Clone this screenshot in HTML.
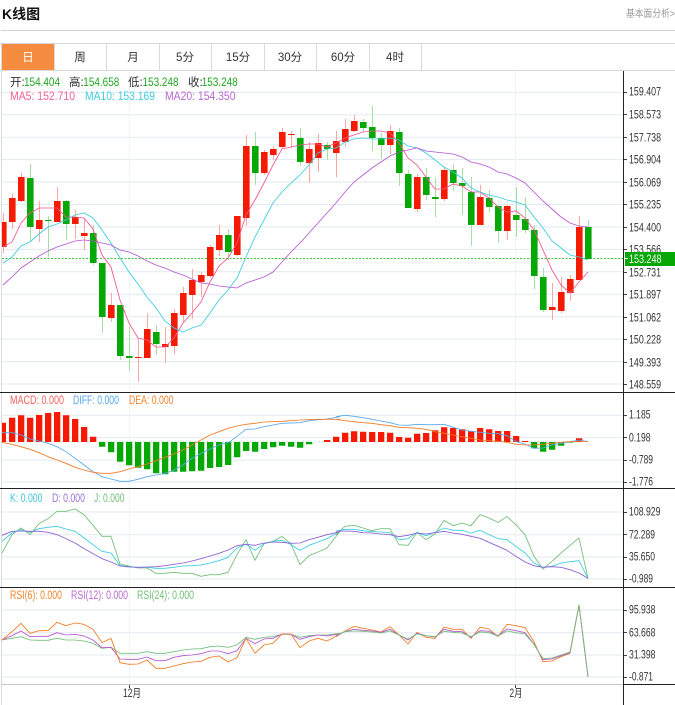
<!DOCTYPE html>
<html><head><meta charset="utf-8"><title>K线图</title>
<style>
html,body{margin:0;padding:0;background:#fff;width:675px;height:705px;overflow:hidden}
svg{display:block}
text{font-family:"Liberation Sans","Noto Sans CJK SC",sans-serif;font-size:11.5px;fill:#333}
.l{fill:none;stroke-width:2.6;stroke-linejoin:round}
.g{stroke:#e1e9ef;stroke-width:1;fill:none}
</style></head><body>
<svg width="675" height="705" viewBox="0 0 675 705" xmlns="http://www.w3.org/2000/svg">
<rect width="675" height="705" fill="#fff"/>
<!-- header -->
<text x="2" y="19" style="font-size:14px;font-weight:bold;fill:#111">K线图</text>
<text x="626" y="17" style="font-size:10px;fill:#999" textLength="49" lengthAdjust="spacingAndGlyphs">基本面分析&gt;</text>
<path d="M1 30.5H675" stroke="#d3d3d3" fill="none"/>
<!-- tabs -->
<path d="M0 43.5H675M0 70.5H675M1.5 44V705M54.5 44V70M106.5 44V70M159.5 44V70M211.5 44V70M264.5 44V70M316.5 44V70M369.5 44V70M421.5 44V70" stroke="#d9d9d9" fill="none"/>
<rect x="2" y="44" width="52" height="26" fill="#f68c40"/>
<g text-anchor="middle">
<text x="28" y="61" style="font-size:11.5px;fill:#fff">日</text>
<text x="80" y="61" style="font-size:11.5px">周</text>
<text x="133" y="61" style="font-size:11.5px">月</text>
<text x="185" y="61" style="font-size:11.5px">5分</text>
<text x="238" y="61" style="font-size:11.5px">15分</text>
<text x="290" y="61" style="font-size:11.5px">30分</text>
<text x="343" y="61" style="font-size:11.5px">60分</text>
<text x="395" y="61" style="font-size:11.5px">4时</text>
</g>
<!-- grids -->
<path class="g" d="M2 92.3H623M2 114.7H623M2 137.2H623M2 159.6H623M2 182H623M2 204.5H623M2 226.9H623M2 249.4H623M2 271.8H623M2 294.2H623M2 316.7H623M2 339.1H623M2 361.6H623M2 384H623"/>
<path class="g" d="M2 415.3H623M2 437.7H623M2 460H623M2 482H623M2 512H623M2 534.7H623M2 557H623M2 579H623M2 610H623M2 632.7H623M2 655H623M2 677H623"/>
<path d="M129.5 71V684M515.5 71V684" stroke="#eef3f6" fill="none"/>
<!-- price dash -->
<path d="M2 258.5H623" stroke="#3cc43c" stroke-dasharray="2 1.5" fill="none"/>
<!-- candle wicks -->
<path fill="none" stroke="#f9a8a2" d="M3.5 213V253M12.5 194V229M21.5 173V202M39.5 201V242M57.5 187V220M75.5 210V239M84.5 218V250M111.5 293V322M138.5 338V382M147.5 313V358M165.5 327V363M174.5 309V354M183.5 287V322M192.5 269V319M201.5 272V297M210.5 245V278M219.5 225V256M237.5 216V256M246.5 135V226M264.5 150V175M273.5 146V160M282.5 128V148M291.5 131V148M309.5 142V183M318.5 134V172M336.5 131V177M345.5 119V147M354.5 115V132M390.5 125V154M417.5 174V212M444.5 167V201M480.5 185V225M507.5 205V240M552.5 283V320M561.5 277V313M570.5 275V301M579.5 216V280"/>
<path fill="none" stroke="#a6dfa6" d="M30.5 164V242M48.5 216V257M66.5 200V240M93.5 225V265M102.5 263V333M120.5 305V360M129.5 326V371M156.5 325V355M228.5 229V260M255.5 132V185M300.5 128V166M327.5 142V160M363.5 119V132M372.5 106V151M381.5 133V159M399.5 128V186M408.5 170V208M426.5 168V200M435.5 178V217M453.5 164V191M462.5 168V215M471.5 177V246M489.5 190V212M498.5 205V243M516.5 187V237M525.5 197V233M534.5 225V289M543.5 268V312M588.5 220V259"/>
<!-- candle bodies -->
<path fill="#f41a04" d="M2 222h4.6V247H2zM9 198h6.6V222H9zM18 177h6.6V201H18zM36 220h6.6V229H36zM54 201h6.6V222H54zM72 217h6.6V224H72zM81 233h6.6V236H81zM108 305h6.6V318H108zM135 357h6.6V358H135zM144 329h6.6V358H144zM162 344h6.6V347H162zM171 313h6.6V346H171zM180 293h6.6V315H180zM189 280h6.6V295H189zM198 275h6.6V282H198zM207 247h6.6V276H207zM216 235h6.6V250H216zM234 216h6.6V255H234zM243 146h6.6V218H243zM261 152h6.6V173H261zM270 149h6.6V155H270zM279 132h6.6V147H279zM288 134h6.6V135H288zM306 149h6.6V163H306zM315 143h6.6V158H315zM333 141h6.6V153H333zM342 129h6.6V142H342zM351 121h6.6V131H351zM387 131h6.6V145H387zM414 177h6.6V209H414zM441 170h6.6V199H441zM477 197h6.6V225H477zM504 206h6.6V231H504zM549 307h6.6V310H549zM558 292h6.6V311H558zM567 279h6.6V293H567zM576 227h6.6V280H576z"/>
<path fill="#06a806" d="M27 178h6.6V227H27zM45 220h6.6V221H45zM63 201h6.6V224H63zM90 233h6.6V263H90zM99 263h6.6V317H99zM117 305h6.6V356H117zM126 356h6.6V358H126zM153 332h6.6V344H153zM225 235h6.6V252H225zM252 146h6.6V173H252zM297 138h6.6V162H297zM324 145h6.6V149H324zM360 122h6.6V128H360zM369 127h6.6V138H369zM378 138h6.6V145H378zM396 132h6.6V173H396zM405 174h6.6V208H405zM423 177h6.6V195H423zM432 197h6.6V199H432zM450 170h6.6V183H450zM459 183h6.6V186H459zM468 192h6.6V225H468zM486 198h6.6V207H486zM495 206h6.6V231H495zM513 215h6.6V220H513zM522 219h6.6V230H522zM531 230h6.6V276H531zM540 277h6.6V310H540zM585 227h6.6V259H585z"/>
<!-- MA lines -->
<polyline fill="none" stroke-width=".85" stroke="#f2558d" points="3,247 12,242 21,223 30,213 39,208 48,208 57,208 66,217 75,217 84,218 93,229 102,255 111,267 120,300 129,323 138,338 147,340 156,347 165,347 174,338 183,323 192,313 201,302 210,282 219,266 228,258 237,243 246,215 255,200 264,183 273,165 282,149 291,147 300,145 309,144 318,144 327,147 336,143 345,138 354,135 363,132 372,131 381,131 390,133 399,143 408,158 417,165 426,177 435,189 444,189 453,184 462,186 471,192 480,192 489,198 498,207 507,212 516,211 525,218 534,230 543,250 552,270 561,285 570,293 579,282 588,272"/>
<polyline fill="none" stroke-width=".85" stroke="#38cce0" points="3,263 12,257 21,246 30,242 39,234 48,227 57,224 66,220 75,215 84,213 93,218 102,230 111,243 120,258 129,272 138,284 147,297 156,308 165,321 174,328 183,332 192,328 201,325 210,313 219,300 228,290 237,278 246,257 255,237 264,220 273,203 282,192 291,183 300,175 309,165 318,153 327,149 336,148 345,142 354,139 363,138 372,139 381,139 390,138 399,140 408,146 417,148 426,153 435,160 444,167 453,172 462,178 471,188 480,192 489,195 498,197 507,200 516,202 525,205 534,217 543,228 552,241 561,248 570,255 579,257 588,260"/>
<polyline fill="none" stroke-width=".85" stroke="#b557cf" points="3,285 12,277 21,268 30,262 39,256 48,251 57,247 66,244 75,241 84,240 93,241 102,243 111,245 120,250 129,252 138,256 147,261 156,265 165,268 174,272 183,275 192,279 201,283 210,284 219,286 228,287 237,288 246,283 255,280 264,277 273,272 282,262 291,252 300,243 309,233 318,223 327,213 336,203 345,192 354,182 363,175 372,168 381,162 390,156 399,152 408,150 417,148 426,151 435,152 444,153 453,154 462,157 471,162 480,164 489,167 498,172 507,174 516,178 525,183 534,192 543,201 552,209 561,217 570,223 579,226 588,227"/>
<!-- MACD -->
<path d="M2 441.7H590" stroke="#c9e0e0" stroke-dasharray="2 2" fill="none"/>
<path fill="#f41a04" d="M2 422.7h4V442H2zM9 417.7h6.3V442H9zM18 415.3h6.3V442H18zM27 417.7h6.3V442H27zM36 415h6.3V442H36zM45 413h6.3V442H45zM54 412h6.3V442H54zM63 415.3h6.3V442H63zM72 419h6.3V442H72zM81 427h6.3V442H81zM90 436.7h6.3V442H90zM324 440h6.3V442H324zM333 436.7h6.3V442H333zM342 432.7h6.3V442H342zM351 431.3h6.3V442H351zM360 431.7h6.3V442H360zM369 432h6.3V442H369zM378 432h6.3V442H378zM387 432.7h6.3V442H387zM396 437h6.3V442H396zM405 437.7h6.3V442H405zM414 433.7h6.3V442H414zM423 433h6.3V442H423zM432 430.3h6.3V442H432zM441 427.3h6.3V442H441zM450 428h6.3V442H450zM459 429.3h6.3V442H459zM468 431h6.3V442H468zM477 428h6.3V442H477zM486 429.3h6.3V442H486zM495 431h6.3V442H495zM504 431h6.3V442H504zM513 436h6.3V442H513zM522 441h6.3V442H522zM576 438.3h6.3V442H576z"/>
<path fill="#06a806" d="M99 442h6.3V446.7H99zM108 442h6.3V452.3H108zM117 442h6.3V461.7H117zM126 442h6.3V465.3H126zM135 442h6.3V467.7H135zM144 442h6.3V469.3H144zM153 442h6.3V473.3H153zM162 442h6.3V474.3H162zM171 442h6.3V471.7H171zM180 442h6.3V471.7H180zM189 442h6.3V471.3H189zM198 442h6.3V470.7H198zM207 442h6.3V468H207zM216 442h6.3V467H216zM225 442h6.3V465H225zM234 442h6.3V457.3H234zM243 442h6.3V451H243zM252 442h6.3V451.7H252zM261 442h6.3V449H261zM270 442h6.3V447.3H270zM279 442h6.3V445.7H279zM288 442h6.3V446.7H288zM297 442h6.3V447.7H297zM306 442h6.3V444.3H306zM531 442h6.3V448.3H531zM540 442h6.3V451.7H540zM549 442h6.3V449.7H549zM558 442h6.3V445.7H558zM567 442h6.3V442.6H567z"/>
<g transform="translate(0,390) scale(.33333)">
<polyline class="l" stroke="#56a8ee" points="6,128 36,128 63,135 90,147 117,153 144,160 171,170 198,185 225,205 252,225 279,245 306,260 333,267 360,274 387,274 414,268 441,260 468,255 495,250 522,240 549,225 576,205 603,190 630,177 657,165 690,155 738,118 765,117 792,110 819,105 846,100 900,98 927,92 981,87 1020,80"/>
<polyline class="l" stroke="#f27b22" points="6,157 36,163 63,170 90,178 117,188 144,200 171,210 198,220 225,232 252,240 279,247 306,250 333,250 360,245 387,237 414,230 441,222 468,212 495,202 522,192 549,180 576,165 603,150 630,135 657,125 684,115 711,108 738,103 765,100 792,96 846,94 900,90 954,88 1020,88"/>
</g>
<g transform="translate(335,390) scale(.33333)">
<polyline class="l" stroke="#56a8ee" points="3,80 30,76 57,79 84,83 111,88 138,93 165,98 192,105 219,106 246,103 273,104 300,104 327,103 354,112 381,120 408,124 435,127 462,130 489,131 516,137 543,155 570,162 597,175 624,174 651,165 678,160 705,155 732,150 759,155"/>
<polyline class="l" stroke="#f27b22" points="3,88 30,92 57,95 84,98 111,100 138,104 165,107 192,112 219,113 246,115 273,118 300,125 327,130 354,135 381,140 408,145 435,150 462,152 489,154 516,157 543,163 570,165 597,165 624,163 651,160 678,157 705,155 732,155 759,154"/>
</g>
<!-- KDJ -->
<g transform="translate(0,488) scale(.33333)">
<polyline class="l" stroke="#72bf78" points="6,195 36,140 63,120 90,140 117,107 144,92 171,70 198,70 225,63 252,80 279,112 306,145 333,145 360,228 387,234 414,240 441,240 468,256 495,256 522,253 549,256 576,256 603,265 630,260 657,260 684,253 711,200 738,155 765,217 792,167 819,160 846,145 873,168 900,230 927,203 954,192 981,180 1020,130"/>
<polyline class="l" stroke="#38cce0" points="6,160 36,135 63,125 90,133 117,122 144,118 171,115 198,123 225,130 252,150 279,170 306,190 333,195 360,232 387,236 414,238 441,238 468,241 495,241 522,238 549,234 576,233 603,231 630,225 657,218 684,208 711,180 738,168 765,187 792,167 819,160 846,157 873,170 900,187 927,172 954,162 981,152 1020,130"/>
<polyline class="l" stroke="#8f5fd2" points="6,142 36,130 63,129 90,130 117,130 144,133 171,140 198,152 225,165 252,182 279,197 306,212 333,222 360,234 387,237 414,238 441,237 468,236 495,233 522,229 549,225 576,219 603,212 630,204 657,196 684,186 711,173 738,169 765,172 792,165 819,162 846,163 873,166 900,165 927,155 954,148 981,140 1020,131"/>
</g>
<g transform="translate(335,488) scale(.33333)">
<polyline class="l" stroke="#72bf78" points="3,140 30,115 57,112 84,120 111,128 138,122 165,122 192,170 219,172 246,133 273,155 300,138 327,97 354,113 381,105 408,113 435,80 462,90 489,103 516,86 543,110 570,140 597,205 624,243 651,220 678,195 705,172 732,150 759,271"/>
<polyline class="l" stroke="#38cce0" points="3,130 30,124 57,124 84,128 111,131 138,132 165,134 192,155 219,152 246,133 273,143 300,133 327,120 354,127 381,127 408,135 435,127 462,140 489,152 516,155 543,175 570,195 597,225 624,238 651,235 678,225 705,221 732,218 759,271"/>
<polyline class="l" stroke="#8f5fd2" points="3,130 30,129 57,130 84,134 111,135 138,138 165,140 192,146 219,142 246,135 273,138 300,134 327,130 354,135 381,139 408,145 435,151 462,163 489,175 516,187 543,205 570,222 597,233 624,238 651,236 678,238 705,245 732,255 759,271"/>
</g>
<!-- RSI -->
<g transform="translate(0,585) scale(.33333)">
<polyline class="l" stroke="#72bf78" points="6,165 36,160 63,155 90,165 117,166 144,166 171,160 198,165 225,165 252,168 279,175 306,190 333,187 360,205 387,205 414,205 441,200 468,205 495,205 522,200 549,195 576,192 603,191 630,185 657,183 684,187 711,180 738,157 765,163 792,157 819,155 846,148 873,148 900,157 927,152 954,150 981,150 1020,145"/>
<polyline class="l" stroke="#b557cf" points="6,165 36,152 63,138 90,155 117,154 144,154 171,143 198,150 225,148 252,153 279,165 306,188 333,187 360,222 387,223 414,223 441,216 468,227 495,227 522,217 549,212 576,210 603,206 630,198 657,198 684,206 711,197 738,160 765,176 792,162 819,160 846,147 873,148 900,163 927,155 954,150 981,153 1020,146"/>
<polyline class="l" stroke="#f27b22" points="6,165 36,140 63,115 90,145 117,137 144,137 171,112 198,122 225,114 252,118 279,133 306,173 333,160 360,233 387,238 414,237 441,225 468,250 495,250 522,243 549,236 576,231 603,229 630,217 657,213 684,231 711,218 738,160 765,205 792,180 819,175 846,147 873,147 900,188 927,168 954,160 981,168 1020,147"/>
</g>
<g transform="translate(335,585) scale(.33333)">
<polyline class="l" stroke="#f27b22" points="3,155 30,138 57,124 84,130 111,135 138,141 165,125 192,150 219,177 246,142 273,157 300,160 327,126 354,133 381,133 408,160 435,127 462,132 489,155 516,118 543,122 570,128 597,170 624,230 651,228 678,215 705,205 732,60 759,275"/>
<polyline class="l" stroke="#b557cf" points="3,152 30,140 57,133 84,136 111,138 138,142 165,133 192,150 219,165 246,145 273,152 300,156 327,133 354,139 381,140 408,157 435,137 462,139 489,152 516,132 543,137 570,143 597,177 624,224 651,222 678,212 705,203 732,60 759,275"/>
<polyline class="l" stroke="#72bf78" points="3,150 30,140 57,138 84,139 111,141 138,144 165,138 192,150 219,162 246,147 273,152 300,155 327,139 354,142 381,144 408,155 435,141 462,143 489,153 516,138 543,143 570,147 597,178 624,221 651,219 678,210 705,201 732,60 759,275"/>
</g>
<!-- panel frames & axis -->
<path d="M0 392.5H675M0 488.5H675M0 587.5H675M624 684.5H675M623.5 71V705" stroke="#222" fill="none"/>
<path d="M2 684.5H623" stroke="#c8c8c8" fill="none"/>
<path d="M624 92.5h3M624 114.5h3M624 137.5h3M624 159.5h3M624 182.5h3M624 204.5h3M624 227.5h3M624 249.5h3M624 272.5h3M624 294.5h3M624 317.5h3M624 339.5h3M624 362.5h3M624 384.5h3M624 415.5h3M624 437.5h3M624 460.5h3M624 482.5h3M624 512.5h3M624 534.5h3M624 557.5h3M624 579.5h3M624 610.5h3M624 632.5h3M624 655.5h3M624 677.5h3M129.5 685v3M515.5 685v3" stroke="#444" fill="none"/>
<!-- axis labels -->
<g>
<text x="629" y="95.5" textLength="32" lengthAdjust="spacingAndGlyphs">159.407</text>
<text x="629" y="118.5" textLength="32" lengthAdjust="spacingAndGlyphs">158.573</text>
<text x="629" y="141.5" textLength="32" lengthAdjust="spacingAndGlyphs">157.738</text>
<text x="629" y="163.5" textLength="32" lengthAdjust="spacingAndGlyphs">156.904</text>
<text x="629" y="186.5" textLength="32" lengthAdjust="spacingAndGlyphs">156.069</text>
<text x="629" y="208.5" textLength="32" lengthAdjust="spacingAndGlyphs">155.235</text>
<text x="629" y="231.5" textLength="32" lengthAdjust="spacingAndGlyphs">154.400</text>
<text x="629" y="253.5" textLength="32" lengthAdjust="spacingAndGlyphs">153.566</text>
<text x="629" y="276.5" textLength="32" lengthAdjust="spacingAndGlyphs">152.731</text>
<text x="629" y="298.5" textLength="32" lengthAdjust="spacingAndGlyphs">151.897</text>
<text x="629" y="321.5" textLength="32" lengthAdjust="spacingAndGlyphs">151.062</text>
<text x="629" y="343.5" textLength="32" lengthAdjust="spacingAndGlyphs">150.228</text>
<text x="629" y="366.5" textLength="32" lengthAdjust="spacingAndGlyphs">149.393</text>
<text x="629" y="388.5" textLength="32" lengthAdjust="spacingAndGlyphs">148.559</text>
<text x="629" y="418.5" textLength="21.5" lengthAdjust="spacingAndGlyphs">1.185</text>
<text x="629" y="441.5" textLength="21.5" lengthAdjust="spacingAndGlyphs">0.198</text>
<text x="629" y="463.5" textLength="24" lengthAdjust="spacingAndGlyphs">-0.789</text>
<text x="629" y="485.5" textLength="24" lengthAdjust="spacingAndGlyphs">-1.776</text>
<text x="629" y="515.5" textLength="31.5" lengthAdjust="spacingAndGlyphs">108.929</text>
<text x="629" y="538.5" textLength="26" lengthAdjust="spacingAndGlyphs">72.289</text>
<text x="629" y="560.5" textLength="26" lengthAdjust="spacingAndGlyphs">35.650</text>
<text x="629" y="582.5" textLength="24" lengthAdjust="spacingAndGlyphs">-0.989</text>
<text x="629" y="613.5" textLength="26.5" lengthAdjust="spacingAndGlyphs">95.938</text>
<text x="629" y="636.5" textLength="26.5" lengthAdjust="spacingAndGlyphs">63.668</text>
<text x="629" y="658.5" textLength="26.5" lengthAdjust="spacingAndGlyphs">31.398</text>
<text x="629" y="680.5" textLength="24" lengthAdjust="spacingAndGlyphs">-0.871</text>
</g>
<rect x="625" y="252" width="50" height="14" fill="#06a806"/>
<path d="M625 258.5h3" stroke="#fff" fill="none"/>
<text x="629" y="263" style="fill:#fff" textLength="32.5" lengthAdjust="spacingAndGlyphs">153.248</text>
<!-- x labels -->
<text x="123" y="697" textLength="18" lengthAdjust="spacingAndGlyphs">12月</text>
<text x="509.5" y="697" textLength="13" lengthAdjust="spacingAndGlyphs">2月</text>
<!-- legends -->
<text x="10" y="86">开:</text>
<text x="24" y="86" style="fill:#1fa71f" textLength="36" lengthAdjust="spacingAndGlyphs">154.404</text>
<text x="69" y="86">高:</text>
<text x="83.3" y="86" style="fill:#1fa71f" textLength="36" lengthAdjust="spacingAndGlyphs">154.658</text>
<text x="128" y="86">低:</text>
<text x="142.5" y="86" style="fill:#1fa71f" textLength="36" lengthAdjust="spacingAndGlyphs">153.248</text>
<text x="188" y="86">收:</text>
<text x="201.7" y="86" style="fill:#1fa71f" textLength="36" lengthAdjust="spacingAndGlyphs">153.248</text>
<text x="10" y="100" style="fill:#f5608f" textLength="65" lengthAdjust="spacingAndGlyphs">MA5: 152.710</text>
<text x="85" y="100" style="fill:#3ecbe0" textLength="70" lengthAdjust="spacingAndGlyphs">MA10: 153.169</text>
<text x="165" y="100" style="fill:#b968d2" textLength="70.5" lengthAdjust="spacingAndGlyphs">MA20: 154.350</text>
<text x="10" y="404" style="fill:#f2625a" textLength="54" lengthAdjust="spacingAndGlyphs">MACD: 0.000</text>
<text x="73" y="404" style="fill:#55a6ec" textLength="46" lengthAdjust="spacingAndGlyphs">DIFF: 0.000</text>
<text x="129" y="404" style="fill:#f2842c" textLength="44.5" lengthAdjust="spacingAndGlyphs">DEA: 0.000</text>
<text x="10" y="502" style="fill:#40c6de" textLength="32.5" lengthAdjust="spacingAndGlyphs">K: 0.000</text>
<text x="52" y="502" style="fill:#9a70d6" textLength="33" lengthAdjust="spacingAndGlyphs">D: 0.000</text>
<text x="94" y="502" style="fill:#72bf78" textLength="30.5" lengthAdjust="spacingAndGlyphs">J: 0.000</text>
<text x="10" y="599" style="fill:#f2842c" textLength="52" lengthAdjust="spacingAndGlyphs">RSI(6): 0.000</text>
<text x="71" y="599" style="fill:#b968d2" textLength="57" lengthAdjust="spacingAndGlyphs">RSI(12): 0.000</text>
<text x="137" y="599" style="fill:#72bf78" textLength="57" lengthAdjust="spacingAndGlyphs">RSI(24): 0.000</text>
</svg>
</body></html>
